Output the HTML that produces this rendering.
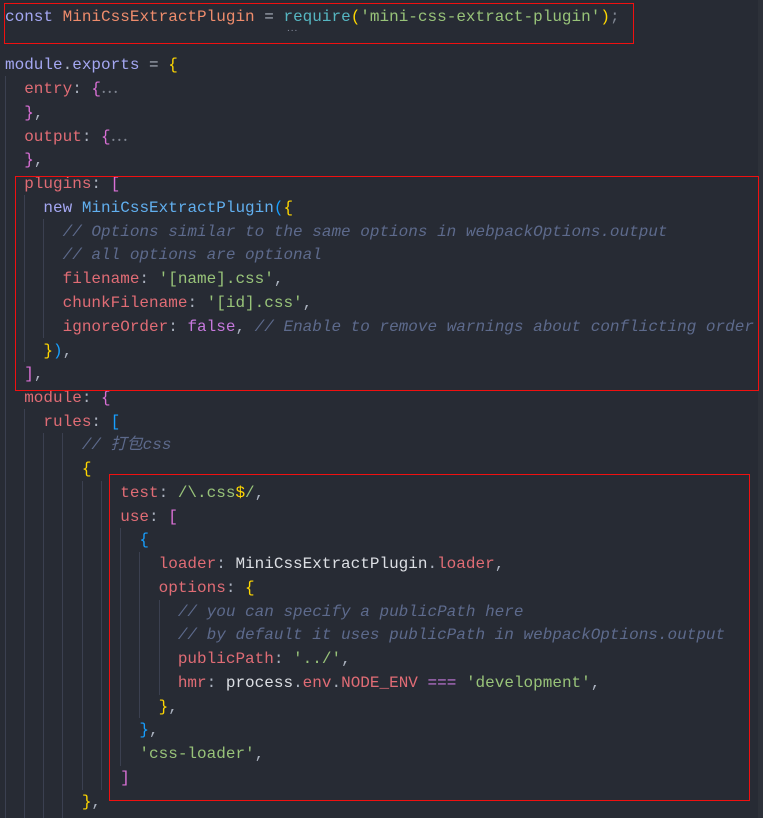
<!DOCTYPE html>
<html><head><meta charset="utf-8"><style>
html,body{margin:0;padding:0;width:763px;height:818px;overflow:hidden;background:#272b34;}
#c{position:relative;width:763px;height:818px;font-family:"Liberation Mono","Noto Sans CJK SC",monospace;font-size:16px;color:#abb2bf;}
.l{position:absolute;left:5px;height:24px;line-height:24px;white-space:pre;}
.g{position:absolute;width:1px;background:#3b4050;}
.k{color:#a4a7f2}.v{color:#ef8c6c}.f{color:#56b6c2}.s{color:#98c379}.p{color:#e06c75}.c{color:#5d6a8c;font-style:italic}
.b{color:#c678dd}.y{color:#ffd700}.o{color:#da70d6}.u{color:#179fff}.w{color:#dcdfe4}.n{color:#61afef}.e{color:#7f8591}
.box{position:absolute;border:1px solid #f01010;z-index:5;}
.sb{position:absolute;left:758px;top:0;width:5px;height:818px;background:#2d3139;}
</style></head><body><div id="c">
<div class="sb"></div>
<div class="g" style="left:5px;top:76px;height:742px"></div>
<div class="g" style="left:24px;top:195px;height:167px"></div>
<div class="g" style="left:24px;top:409px;height:409px"></div>
<div class="g" style="left:43px;top:219px;height:119px"></div>
<div class="g" style="left:43px;top:433px;height:385px"></div>
<div class="g" style="left:62px;top:433px;height:385px"></div>
<div class="g" style="left:82px;top:481px;height:309px"></div>
<div class="g" style="left:101px;top:481px;height:309px"></div>
<div class="g" style="left:120px;top:528px;height:238px"></div>
<div class="g" style="left:139px;top:552px;height:166px"></div>
<div class="g" style="left:159px;top:600px;height:95px"></div>
<div class="l" style="top:5px"><span class="k">const</span> <span class="v">MiniCssExtractPlugin</span> = <span class="f">require</span><span class="y">(</span><span class="s">'mini-css-extract-plugin'</span><span class="y">)</span><span class="e">;</span></div>
<div style="position:absolute;left:287px;top:23px;color:#8a90a0;font-size:10px;font-family:'Liberation Sans',sans-serif;letter-spacing:1px">...</div>
<div class="l" style="top:53px"><span class="k">module</span>.<span class="k">exports</span> = <span class="y">{</span></div>
<div class="l" style="top:77px">  <span class="p">entry</span>: <span class="o">{</span><span class="e">⋯</span></div>
<div class="l" style="top:101px">  <span class="o">}</span>,</div>
<div class="l" style="top:125px">  <span class="p">output</span>: <span class="o">{</span><span class="e">⋯</span></div>
<div class="l" style="top:148px">  <span class="o">}</span>,</div>
<div class="l" style="top:172px">  <span class="p">plugins</span>: <span class="o">[</span></div>
<div class="l" style="top:196px">    <span class="k">new</span> <span class="n">MiniCssExtractPlugin</span><span class="u">(</span><span class="y">{</span></div>
<div class="l" style="top:220px">      <span class="c">// Options similar to the same options in webpackOptions.output</span></div>
<div class="l" style="top:243px">      <span class="c">// all options are optional</span></div>
<div class="l" style="top:267px">      <span class="p">filename</span>: <span class="s">'[name].css'</span>,</div>
<div class="l" style="top:291px">      <span class="p">chunkFilename</span>: <span class="s">'[id].css'</span>,</div>
<div class="l" style="top:315px">      <span class="p">ignoreOrder</span>: <span class="b">false</span>, <span class="c">// Enable to remove warnings about conflicting order</span></div>
<div class="l" style="top:339px">    <span class="y">}</span><span class="u">)</span>,</div>
<div class="l" style="top:362px">  <span class="o">]</span>,</div>
<div class="l" style="top:386px">  <span class="p">module</span>: <span class="o">{</span></div>
<div class="l" style="top:410px">    <span class="p">rules</span>: <span class="u">[</span></div>
<div class="l" style="top:433px">        <span class="c">// 打包css</span></div>
<div class="l" style="top:457px">        <span class="y">{</span></div>
<div class="l" style="top:481px">            <span class="p">test</span>: <span class="s">/\.css</span><span class="y">$</span><span class="s">/</span>,</div>
<div class="l" style="top:505px">            <span class="p">use</span>: <span class="o">[</span></div>
<div class="l" style="top:528px">              <span class="u">{</span></div>
<div class="l" style="top:552px">                <span class="p">loader</span>: <span class="w">MiniCssExtractPlugin</span>.<span class="p">loader</span>,</div>
<div class="l" style="top:576px">                <span class="p">options</span>: <span class="y">{</span></div>
<div class="l" style="top:600px">                  <span class="c">// you can specify a publicPath here</span></div>
<div class="l" style="top:623px">                  <span class="c">// by default it uses publicPath in webpackOptions.output</span></div>
<div class="l" style="top:647px">                  <span class="p">publicPath</span>: <span class="s">'../'</span>,</div>
<div class="l" style="top:671px">                  <span class="p">hmr</span>: <span class="w">process</span>.<span class="p">env</span>.<span class="p">NODE_ENV</span> <span class="b">===</span> <span class="s">'development'</span>,</div>
<div class="l" style="top:695px">                <span class="y">}</span>,</div>
<div class="l" style="top:718px">              <span class="u">}</span>,</div>
<div class="l" style="top:742px">              <span class="s">'css-loader'</span>,</div>
<div class="l" style="top:766px">            <span class="o">]</span></div>
<div class="l" style="top:790px">        <span class="y">}</span>,</div>
<div class="box" style="left:4px;top:3px;width:628px;height:39px"></div>
<div class="box" style="left:15px;top:176px;width:742px;height:213px"></div>
<div class="box" style="left:109px;top:474px;width:639px;height:325px"></div>
</div>
</body></html>
